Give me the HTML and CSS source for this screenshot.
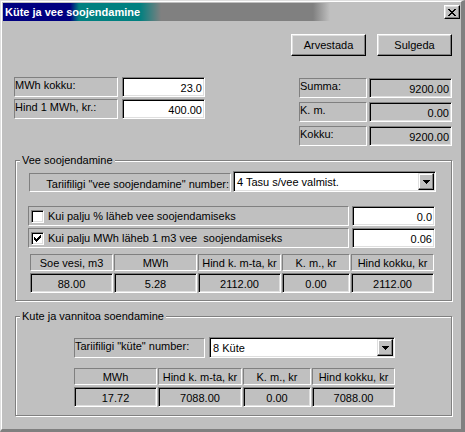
FILE: index.html
```html
<!DOCTYPE html>
<html>
<head>
<meta charset="utf-8">
<link rel="stylesheet" href="styles.css">
</head>
<body>
<div class="window">
  <div class="frame">
    <div class="titlebar">
      <span class="title">Küte ja vee soojendamine</span>
      <div class="close">
        <svg width="8" height="7" viewBox="0 0 8 7" shape-rendering="crispEdges">
          <path d="M0 0h2v1H0zM6 0h2v1H6zM1 1h2v1H1zM5 1h2v1H5zM2 2h4v1H2zM3 3h2v1H3zM2 4h4v1H2zM1 5h2v1H1zM5 5h2v1H5zM0 6h2v1H0zM6 6h2v1H6z" fill="#000"/>
        </svg>
      </div>
    </div>
    <div class="client">
      <div class="actions">
        <div class="btn">Arvestada</div>
        <div class="btn">Sulgeda</div>
      </div>
      <div class="top">
        <div class="inputs">
          <div class="row gap4"><div class="lbl w104">MWh kokku:</div><div class="field w83">23.0</div></div>
          <div class="row gap4"><div class="lbl w104">Hind 1 MWh, kr.:</div><div class="field w83">400.00</div></div>
        </div>
        <div class="totals">
          <div class="row gap2"><div class="lbl w68">Summa:</div><div class="field ro w83">9200.00</div></div>
          <div class="row gap2"><div class="lbl w68">K. m.</div><div class="field ro w83">0.00</div></div>
          <div class="row gap2"><div class="lbl w68">Kokku:</div><div class="field ro w83">9200.00</div></div>
        </div>
      </div>

      <div class="group g1">
        <div class="legend">Vee soojendamine</div>
        <div class="tariff t1">
          <div class="lbl tl1">Tariifiligi "vee soojendamine" number:</div>
          <div class="combo c1">
            <span class="combo-text">4 Tasu s/vee valmist.</span>
            <div class="combo-btn">
              <svg width="7" height="4" viewBox="0 0 7 4" shape-rendering="crispEdges"><path d="M0 0h7v1H0zM1 1h5v1H1zM2 2h3v1H2zM3 3h1v1H3z" fill="#000"/></svg>
            </div>
          </div>
        </div>
        <div class="checks">
          <div class="crow">
            <div class="clabel">
              <span class="cbox"></span>
              <span>Kui palju % läheb vee soojendamiseks</span>
            </div>
            <div class="field w83">0.0</div>
          </div>
          <div class="crow">
            <div class="clabel">
              <span class="cbox">
                <svg width="7" height="7" viewBox="0 0 7 7" shape-rendering="crispEdges"><path d="M6 0h1v1H6zM5 1h2v1H5zM0 2h1v1H0zM4 2h3v1H4zM0 3h2v1H0zM3 3h3v1H3zM0 4h5v1H0zM1 5h3v1H1zM2 6h1v1H2z" fill="#000"/></svg>
              </span>
              <span>Kui palju MWh läheb 1 m3 vee&nbsp; soojendamiseks</span>
            </div>
            <div class="field w83">0.06</div>
          </div>
        </div>
        <div class="tbl tbl1">
          <div class="th">Soe vesi, m3</div>
          <div class="th">MWh</div>
          <div class="th">Hind k. m-ta, kr</div>
          <div class="th">K. m., kr</div>
          <div class="th">Hind kokku, kr</div>
          <div class="td">88.00</div>
          <div class="td">5.28</div>
          <div class="td">2112.00</div>
          <div class="td">0.00</div>
          <div class="td">2112.00</div>
        </div>
      </div>

      <div class="group g2">
        <div class="legend">Kute ja vannitoa soendamine</div>
        <div class="tariff t2">
          <div class="lbl tl2">Tariifiligi "küte" number:</div>
          <div class="combo c2">
            <span class="combo-text">8 Küte</span>
            <div class="combo-btn">
              <svg width="7" height="4" viewBox="0 0 7 4" shape-rendering="crispEdges"><path d="M0 0h7v1H0zM1 1h5v1H1zM2 2h3v1H2zM3 3h1v1H3z" fill="#000"/></svg>
            </div>
          </div>
        </div>
        <div class="tbl tbl2">
          <div class="th">MWh</div>
          <div class="th">Hind k. m-ta, kr</div>
          <div class="th">K. m., kr</div>
          <div class="th">Hind kokku, kr</div>
          <div class="td">17.72</div>
          <div class="td">7088.00</div>
          <div class="td">0.00</div>
          <div class="td">7088.00</div>
        </div>
      </div>
    </div>
  </div>
</div>
</body>
</html>
```

FILE: styles.css
```css
* { box-sizing: border-box; }

body {
  margin: 0;
  background: #c0c0c0;
  font-family: "Liberation Sans", Arial, sans-serif;
  font-size: 11px;
  color: #000;
}

.window {
  width: 465px;
  height: 432px;
  border-style: solid;
  border-width: 1px 3px 2px 1px;
  border-color: #dfdfdf #808080 #808080 #dfdfdf;
  background: #c0c0c0;
}

.frame {
  height: 100%;
  border: 1px solid;
  border-color: #fff #808080 #808080 #fff;
  padding: 1px;
  display: flex;
  flex-direction: column;
}

.titlebar {
  height: 18px;
  flex: none;
  display: flex;
  align-items: center;
  justify-content: space-between;
  background: linear-gradient(to right, #000080 0 67px, #008080 76px 137px, #808080 158px 310px, #c0c0c0 327px);
}

.title {
  color: #fff;
  font-weight: bold;
  padding-left: 2px;
}

.close {
  width: 16px;
  height: 14px;
  margin-right: 0;
  background: #c0c0c0;
  border: 1px solid;
  border-color: #fff #000 #000 #fff;
  box-shadow: inset -1px -1px 0 #808080, inset 1px 1px 0 #dfdfdf;
  display: flex;
  align-items: center;
  justify-content: center;
}

.close svg { display: block; margin-left: -1px; }

.client { flex: 1; }

.actions {
  display: flex;
  justify-content: flex-end;
  gap: 11px;
  margin-top: 13px;
  margin-right: 8px;
}

.btn {
  width: 75px;
  height: 22px;
  display: flex;
  align-items: center;
  justify-content: center;
  border: 1px solid;
  border-color: #fff #000 #000 #fff;
  box-shadow: inset -1px -1px 0 #808080, inset 1px 1px 0 #dfdfdf;
}

.top {
  display: flex;
  justify-content: space-between;
  margin-top: 21px;
  padding: 0 8px 0 11px;
}

.inputs { display: flex; flex-direction: column; gap: 2px; }
.totals { display: flex; flex-direction: column; gap: 4px; margin-top: 1px; }

.row { display: flex; }
.gap4 { gap: 4px; }
.gap2 { gap: 2px; }

.w104 { width: 104px; }
.w83 { width: 83px; }
.w68 { width: 68px; }

.lbl {
  height: 20px;
  border: 1px solid;
  border-color: #808080 #fff #fff #808080;
  line-height: 13px;
  padding: 1px 0 0 0;
  white-space: nowrap;
}

.field {
  height: 20px;
  border: 1px solid;
  border-color: #808080 #fff #fff #808080;
  box-shadow: inset 1px 1px 0 #000, inset -1px -1px 0 #dfdfdf;
  background: #fff;
  display: flex;
  align-items: center;
  justify-content: flex-end;
  padding: 1px 2px 0 0;
}

.field.ro { background: #c0c0c0; }

.group {
  margin-left: 12px;
  width: 437px;
  border: 1px solid #808080;
  box-shadow: inset 1px 1px 0 #fff, 1px 1px 0 #fff;
}

.g1 { height: 141px; margin-top: 14px; }
.g2 { height: 100px; margin-top: 15px; }

.legend {
  display: table;
  margin: -7px 0 0 4px;
  padding: 0 2px;
  background: #c0c0c0;
  line-height: 13px;
}

.tariff { display: flex; align-items: flex-end; }
.t1 { margin: 4px 0 0 13px; gap: 2px; }
.t2 { margin: 14px 0 0 58px; gap: 4px; }

.tl1 {
  width: 202px;
  height: 19px;
  text-align: right;
  padding: 4px 1px 0 0;
}

.tl2 { width: 131px; height: 20px; }

.combo {
  height: 21px;
  border: 1px solid;
  border-color: #808080 #fff #fff #808080;
  box-shadow: inset 1px 1px 0 #000, inset -1px -1px 0 #dfdfdf;
  background: #fff;
  display: flex;
  align-items: center;
  justify-content: space-between;
  padding: 1px 1px 1px 3px;
}

.c1 { width: 203px; }
.c2 { width: 186px; }

.combo-btn {
  width: 16px;
  height: 17px;
  background: #c0c0c0;
  border: 1px solid;
  border-color: #dfdfdf #000 #000 #dfdfdf;
  box-shadow: inset -1px -1px 0 #808080, inset 1px 1px 0 #fff;
  display: flex;
  align-items: center;
  justify-content: center;
}

.combo-btn svg { display: block; }

.checks {
  display: flex;
  flex-direction: column;
  gap: 2px;
  margin: 14px 0 0 12px;
}

.crow { display: flex; gap: 3px; }

.clabel {
  width: 321px;
  height: 20px;
  border: 1px solid;
  border-color: #808080 #fff #fff #808080;
  display: flex;
  align-items: center;
  gap: 4px;
  padding-left: 2px;
}

.cbox {
  width: 13px;
  height: 13px;
  flex: none;
  background: #fff;
  border: 1px solid;
  border-color: #808080 #fff #fff #808080;
  box-shadow: inset 1px 1px 0 #000, inset -1px -1px 0 #dfdfdf;
  display: flex;
  align-items: center;
  justify-content: center;
}

.cbox svg { display: block; }

.tbl { display: grid; gap: 2px 1px; }
.tbl1 { grid-template-columns: 83px 83px 83px 68px 83px; margin: 6px 0 0 14px; }
.tbl2 { grid-template-columns: 83px 84px 68px 83px; margin: 10px 0 0 58px; }

.th {
  height: 17px;
  border: 1px solid;
  border-color: #808080 #fff #fff #808080;
  display: flex;
  align-items: center;
  justify-content: center;
}

.td {
  height: 20px;
  border: 1px solid;
  border-color: #808080 #fff #fff #808080;
  box-shadow: inset 1px 1px 0 #000, inset -1px -1px 0 #dfdfdf;
  display: flex;
  align-items: center;
  justify-content: center;
  padding-top: 1px;
}
```
